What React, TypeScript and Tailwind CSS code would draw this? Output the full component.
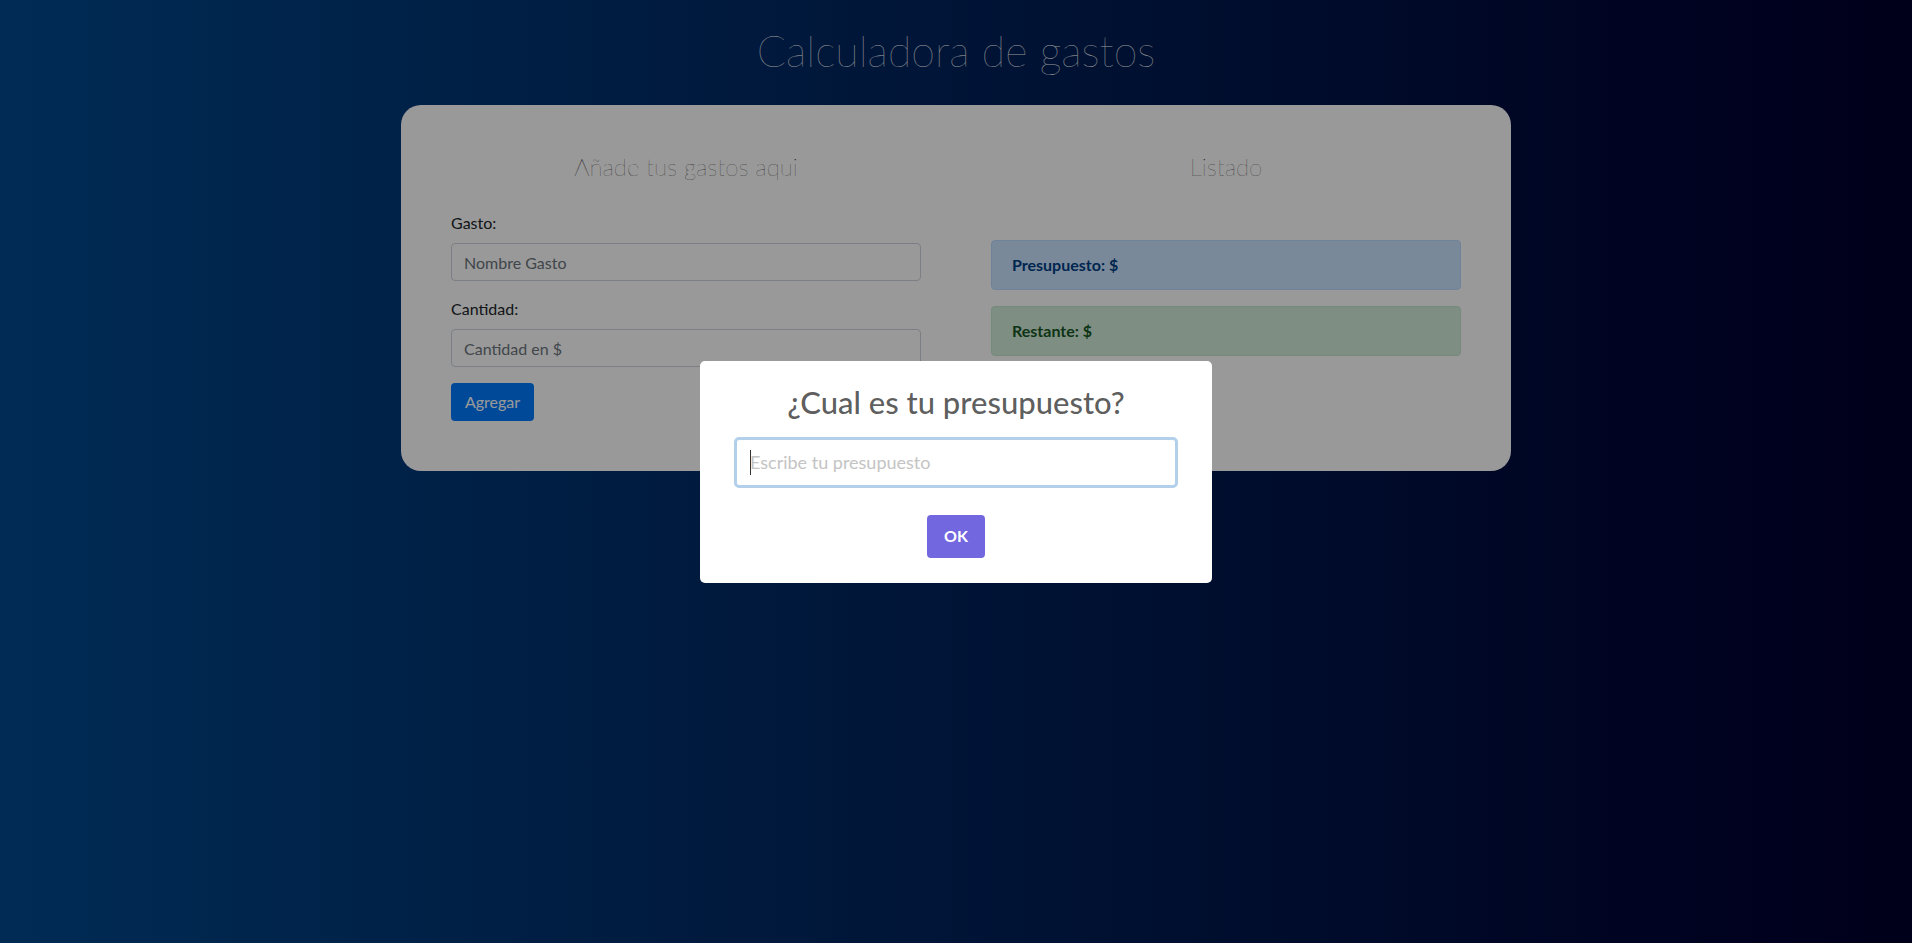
export default function App() {
  return (
    <div className="relative min-h-screen bg-gradient-to-r from-[#02498e] to-[#00002c] font-['Lato','Liberation_Sans',sans-serif]">
      <div className="pt-[27px]">
        <h1 className="text-center text-[43px] font-thin leading-[48px] text-white">Calculadora de gastos</h1>
        <div className="mx-auto mt-[30px] grid w-[1110px] grid-cols-2 gap-[70px] rounded-[20px] bg-white p-[50px]">
          <div>
            <h2 className="mb-[32px] text-center text-[24px] font-thin leading-[24px] text-[#333]">Añade tus gastos aqui</h2>
            <form>
              <div className="mb-4">
                <label className="mb-2 block text-[16px] font-normal leading-6 text-[#212529]">Gasto:</label>
                <input
                  className="block h-[38px] w-full rounded border border-[#ced4da] px-3 text-[16px] text-[#495057] placeholder:text-[#6c757d]"
                  placeholder="Nombre Gasto"
                />
              </div>
              <div className="mb-4">
                <label className="mb-2 block text-[16px] font-normal leading-6 text-[#212529]">Cantidad:</label>
                <input
                  className="block h-[38px] w-full rounded border border-[#ced4da] px-3 text-[16px] text-[#495057] placeholder:text-[#6c757d]"
                  placeholder="Cantidad en $"
                />
              </div>
              <button type="button" className="h-[38px] w-[83px] rounded bg-[#007bff] text-[16px] text-white">
                Agregar
              </button>
            </form>
          </div>
          <div>
            <h2 className="mb-[61px] text-center text-[24px] font-thin leading-[24px] text-[#333]">Listado</h2>
            <div className="mb-4 rounded border border-[#b8daff] bg-[#cce5ff] px-5 py-3 text-[16px] font-bold leading-6 text-[#004085]">
              Presupuesto: $
            </div>
            <div className="rounded border border-[#c3e6cb] bg-[#d4edda] px-5 py-3 text-[16px] font-bold leading-6 text-[#155724]">
              Restante: $
            </div>
          </div>
        </div>
      </div>

      {/* modal */}
      <div className="fixed inset-0 flex items-center justify-center bg-black/40">
        <div className="w-[512px] rounded-[5px] bg-white px-[34px] pb-[25px] pt-[24px]">
          <h2 className="text-center text-[31px] font-medium leading-[34px] text-black/65">¿Cual es tu presupuesto?</h2>
          <div className="relative mt-[18px]">
            <input
              className="block h-[51px] w-full rounded-[5px] border-[3px] border-[#b3d0ea] pl-[13px] text-[18px] outline-none placeholder:text-[#c4c4c4]"
              placeholder="Escribe tu presupuesto"
            />
            <span className="absolute left-[16px] top-[13px] h-[25px] w-px bg-[#333]" />
          </div>
          <div className="mt-[27px] flex justify-center">
            <button type="button" className="h-[43px] w-[58px] rounded bg-[#7367e0] text-[16px] font-bold text-white">
              OK
            </button>
          </div>
        </div>
      </div>
    </div>
  )
}
